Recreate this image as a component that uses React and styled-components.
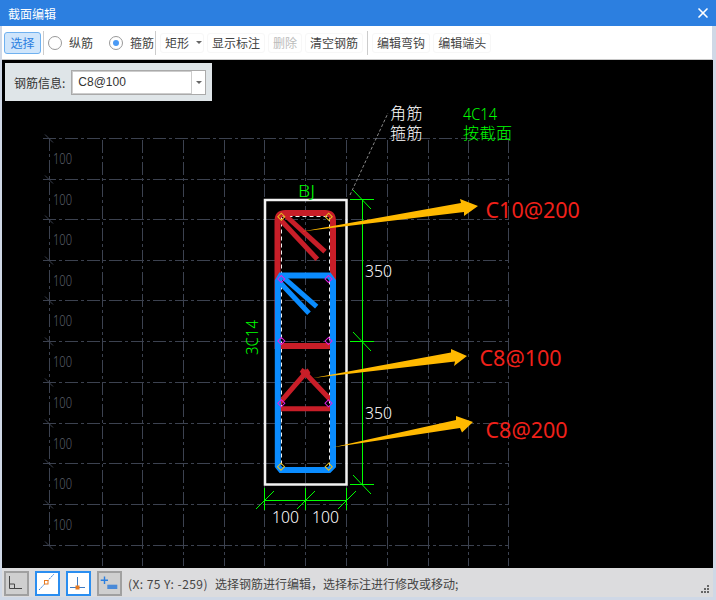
import React from "react";
import styled, { createGlobalStyle } from "styled-components";
import { FiX } from "react-icons/fi";

const CJK = `"Noto Sans CJK SC", "Noto Sans", sans-serif`;
const CAD = `"Noto Sans", sans-serif`;
const GRID = "#3c4250";
const GREEN = "#00ff00";
const RED = "#c81e28";
const BLUE = "#0a8cff";
const ORANGE = "#ffb900";

const Global = createGlobalStyle`
  html, body { margin: 0; padding: 0; height: 600px; overflow: hidden; background: #cfd8e6; }
  #root { height: 600px; }
`;

const gridX = [102.5, 142.5, 183.5, 224.5, 264.5, 305.5, 346.5, 387.5, 428.5, 468.5, 508.5];
const gridY = [138.5, 179.5, 219.5, 260.5, 300.5, 341.5, 382.5, 423.5, 463.5, 504.5, 545.5];
const DASH = "13 3 3 3";

const pins = [
  [281.3, 216.7, "#e8c020"],
  [328.7, 216.7, "#e8c020"],
  [281.3, 279, "#e020e0"],
  [328.5, 279, "#e020e0"],
  [281.3, 341, "#e020e0"],
  [328.5, 341, "#e020e0"],
  [281.3, 403.3, "#e020e0"],
  [328.5, 403.3, "#e020e0"],
  [281, 466.7, "#e8c020"],
  [328.7, 466.7, "#e8c020"],
];

const CadText = ({ x, y, fill, size, len, children }) => (
  <text x={x} y={y} fill={fill} stroke="none" fontSize={size} fontWeight="300" fontFamily={CAD} textLength={len} lengthAdjust="spacingAndGlyphs">
    {children}
  </text>
);

const Label = ({ x, y, children }) => (
  <text x={x} y={y} fill="#f0201a" fontSize="21.5" fontFamily="Noto Sans, sans-serif">
    {children}
  </text>
);

const Grid = () => (
  <g stroke={GRID} strokeWidth="1" fill="none">
    {gridX.map((x) => (
      <line key={x} x1={x} y1="140" x2={x} y2="566" strokeDasharray={DASH} />
    ))}
    {gridY.map((y) => (
      <line key={y} x1="43" y1={y} x2="509" y2={y} strokeDasharray={DASH} />
    ))}
    <line x1="49.5" y1="138" x2="49.5" y2="546" strokeDasharray={DASH} />
    {gridY.map((y) => (
      <line key={"t" + y} x1="45" y1={y - 4} x2="53" y2={y + 4} />
    ))}
    {gridY.slice(0, 10).map((y) => (
      <CadText key={"l" + y} x={53} y={y + 25} fill="#5a5f69" size={14} len={19}>
        100
      </CadText>
    ))}
  </g>
);

const Section = () => (
  <Drawing viewBox="0 60 716 508" width="716" height="508">
    <Grid />
    <line x1="350" y1="195" x2="388" y2="113" stroke="#888" strokeDasharray="3 2" />
    <rect x="265" y="200" width="81.5" height="284.5" fill="none" stroke="#f2f2f2" strokeWidth="2.5" />
    <rect x="281.5" y="216.5" width="48" height="251" fill="none" stroke="#f0f0f0" strokeDasharray="4 3" />

    <g fill="none" stroke={RED} strokeWidth="6">
      <path d="M277.5 346 V221 Q277.5 213 285.5 213 H325 Q333 213 333 221 V346 Z" />
      <g strokeWidth="5">
        <line x1="280.7" y1="220" x2="317.3" y2="259.3" />
        <line x1="285" y1="215" x2="325" y2="251.7" />
        <line x1="277.5" y1="408.7" x2="333" y2="408.7" />
        <path d="M279.3 403.3 L305.3 373.3 L330.7 400" />
        <line x1="301" y1="370" x2="309" y2="375" />
        <line x1="302" y1="375" x2="309" y2="370.5" />
      </g>
    </g>
    <g fill="none" stroke={BLUE} strokeWidth="6">
      <path d="M277.8 281 L281 275.5 H329 L333 281 V466 L329 470 H281 L277.8 466 Z" />
      <g strokeWidth="5">
        <line x1="279.3" y1="281.7" x2="309" y2="313.3" />
        <line x1="283.3" y1="277.3" x2="316.7" y2="306.7" />
      </g>
    </g>

    {pins.map(([x, y, c]) => (
      <rect key={x + "-" + y} x={x - 2.5} y={y - 2.5} width="5" height="5" fill="none" stroke={c} transform={`rotate(45 ${x} ${y})`} />
    ))}

    <g stroke={GREEN} strokeWidth="1" fill="none">
      <line x1="362.5" y1="199" x2="362.5" y2="485" />
      <line x1="350" y1="199.5" x2="374" y2="199.5" />
      <line x1="350" y1="341.5" x2="374" y2="341.5" />
      <line x1="350" y1="484.5" x2="374" y2="484.5" />
      <line x1="353" y1="190" x2="371" y2="209" />
      <line x1="353" y1="332" x2="371" y2="351" />
      <line x1="353" y1="475" x2="371" y2="494" />
      <line x1="264" y1="500.5" x2="347" y2="500.5" />
      <line x1="264.5" y1="488" x2="264.5" y2="510" />
      <line x1="305.5" y1="488" x2="305.5" y2="510" />
      <line x1="346.5" y1="488" x2="346.5" y2="510" />
      <line x1="256" y1="509" x2="274" y2="491" />
      <line x1="297" y1="509" x2="315" y2="491" />
      <line x1="338" y1="509" x2="356" y2="491" />
    </g>

    <polygon points="302,231.5 461,203 460,199 478,206 464,216 464,212" fill={ORANGE} />
    <polygon points="313,378 451,352.5 451,349 467,356 454,366 455,361.5" fill={ORANGE} />
    <polygon points="332,447.5 456,420 456,416 473,422 462,432.5 460,428" fill={ORANGE} />

    <CadText x={365} y={277} fill="#fff" size={17} len={27}>350</CadText>
    <CadText x={365} y={419} fill="#fff" size={17} len={27}>350</CadText>
    <CadText x={272} y={523} fill="#fff" size={17} len={27}>100</CadText>
    <CadText x={312} y={523} fill="#fff" size={17} len={27}>100</CadText>
    <CadText x={298} y={197} fill={GREEN} size={16} len={17}>BJ</CadText>
    <CadText x={463} y={120} fill={GREEN} size={16} len={34}>4C14</CadText>
    <g transform="rotate(-90 258 355)">
      <CadText x={258} y={355} fill={GREEN} size={16} len={35}>3C14</CadText>
    </g>
    <CanvasText x="390" y="119" fill="#fff">角筋</CanvasText>
    <CanvasText x="390" y="139" fill="#fff">箍筋</CanvasText>
    <CanvasText x="463" y="139" fill={GREEN}>按截面</CanvasText>

    <Label x="485.5" y="218">C10@200</Label>
    <Label x="479.5" y="366">C8@100</Label>
    <Label x="485.5" y="438">C8@200</Label>
  </Drawing>
);

const App = () => (
  <>
    <Global />
    <Window>
      <TitleBar>
        <Title>截面编辑</Title>
        <Close><FiX size={16} strokeWidth={2.5} color="#fff" /></Close>
      </TitleBar>
      <Toolbar>
        <Tool $active>选择</Tool>
        <Sep $left={-1} />
        <RadioWrap>
          <Radio />
          <span>纵筋</span>
        </RadioWrap>
        <RadioWrap $left={13}>
          <Radio $on />
          <span>箍筋</span>
        </RadioWrap>
        <Sep $left={-2} />
        <Tool>
          矩形<ToolCaret />
        </Tool>
        <Tool>显示标注</Tool>
        <Tool $disabled>删除</Tool>
        <Tool>清空钢筋</Tool>
        <Sep $left={1} />
        <Tool>编辑弯钩</Tool>
        <Tool>编辑端头</Tool>
      </Toolbar>
      <Canvas>
        <Section />
        <InfoPanel>
          <span>钢筋信息:</span>
          <Combo>
            <ComboValue>C8@100</ComboValue>
            <ComboDrop><Caret /></ComboDrop>
          </Combo>
        </InfoPanel>
      </Canvas>
      <StatusBar>
        <StatusBtn>
          <svg width="21" height="21" viewBox="0 0 21 21" fill="none" stroke="#444">
            <path d="M3.5 3 V15.5 H16" />
            <path d="M3.5 11 H8.5 V15.5" />
          </svg>
        </StatusBtn>
        <StatusBtn $on>
          <svg width="21" height="21" viewBox="0 0 21 21" fill="none">
            <line x1="2" y1="17" x2="17" y2="1" stroke="#2b7fe0" strokeDasharray="2 1" />
            <rect x="7.5" y="7.5" width="3.5" height="3.5" fill="#fff" stroke="#e87a20" />
          </svg>
        </StatusBtn>
        <StatusBtn $on>
          <svg width="21" height="21" viewBox="0 0 21 21" fill="none">
            <line x1="9.5" y1="4" x2="9.5" y2="15" stroke="#3f7cc4" />
            <line x1="2" y1="14.5" x2="17" y2="14.5" stroke="#3f7cc4" />
            <rect x="7.5" y="12.5" width="4" height="4" fill="#e87a20" />
          </svg>
        </StatusBtn>
        <StatusBtn>
          <svg width="21" height="21" viewBox="0 0 21 21" fill="none">
            <path d="M5.5 3.5 V11 M1.7 7.3 H9" stroke="#2b7fe0" strokeWidth="1.4" />
            <rect x="8.3" y="11.7" width="10" height="4.3" fill="#4a8ad8" />
          </svg>
        </StatusBtn>
        <StatusText>
          <Coords>(X: 75 Y: -259)</Coords>
          选择钢筋进行编辑，选择标注进行修改或移动;
        </StatusText>
        <Grip width="10" height="10" viewBox="0 0 10 10" fill="#666">
          <rect x="7" y="0" width="2" height="2" />
          <rect x="4" y="3" width="2" height="2" />
          <rect x="7" y="3" width="2" height="2" />
          <rect x="1" y="6" width="2" height="2" />
          <rect x="4" y="6" width="2" height="2" />
          <rect x="7" y="6" width="2" height="2" />
        </Grip>
      </StatusBar>
    </Window>
  </>
);

const Window = styled.div`
  width: 716px;
  height: 600px;
  display: flex;
  flex-direction: column;
  font-family: ${CJK};
  font-size: 12px;
  color: #333;
  background: #cfd8e6;
  overflow: hidden;
`;

const TitleBar = styled.div`
  height: 26px;
  flex: none;
  background: #2c7fe0;
  display: flex;
  align-items: center;
  justify-content: space-between;
  padding: 0 5px 0 8px;
`;

const Title = styled.div`
  color: #fff;
  font-size: 12px;
`;

const Close = styled.div`
  display: flex;
  align-items: center;
`;

const Toolbar = styled.div`
  height: 33px;
  flex: none;
  margin: 0 4px 0 2px;
  background: #fff;
  border-bottom: 1px solid #c8c8c8;
  display: flex;
  align-items: center;
  gap: 3px;
  padding-left: 2px;
`;

const Tool = styled.div`
  height: ${(p) => (p.$active ? "22px" : "20px")};
  box-sizing: border-box;
  padding: 0 ${(p) => (p.$active ? "5.5px" : "4px")};
  display: flex;
  align-items: center;
  gap: 7px;
  border-radius: 3px;
  border: 1px solid ${(p) => (p.$active ? "#6fb1f0" : "#f7f7f7")};
  background: ${(p) => (p.$active ? "#cfe5fb" : "#fff")};
  color: ${(p) => (p.$active ? "#2b7fe0" : p.$disabled ? "#bbb" : "#444")};
`;

const Sep = styled.div`
  width: 1px;
  height: 24px;
  margin-left: ${(p) => p.$left}px;
  margin-right: 1px;
  background: #ccc;
`;

const RadioWrap = styled.div`
  display: flex;
  align-items: center;
  gap: 7px;
  margin-left: ${(p) => p.$left || 0}px;
  color: #444;
`;

const Radio = styled.div`
  width: 14px;
  height: 14px;
  box-sizing: border-box;
  border-radius: 50%;
  border: 1px solid #999;
  background: #fff;
  display: flex;
  align-items: center;
  justify-content: center;
  &::after {
    content: "";
    display: ${(p) => (p.$on ? "block" : "none")};
    width: 6px;
    height: 6px;
    border-radius: 50%;
    background: #4a9af5;
  }
`;

const Caret = styled.i`
  display: inline-block;
  width: 0;
  height: 0;
  border-left: 3px solid transparent;
  border-right: 3px solid transparent;
  border-top: 3px solid #666;
`;

const ToolCaret = styled(Caret)`
  margin-right: -3px;
`;

const Canvas = styled.div`
  flex: 1;
  position: relative;
  margin: 0 3px 0 2px;
  background: #000;
  overflow: hidden;
`;

const Drawing = styled.svg`
  position: absolute;
  left: -2px;
  top: 0;
`;

const CanvasText = styled.text`
  font-family: ${CJK};
  font-size: 16px;
  font-weight: 300;
  letter-spacing: 0.5px;
`;

const InfoPanel = styled.div`
  position: absolute;
  left: 3px;
  top: 3px;
  width: 207px;
  height: 38px;
  box-sizing: border-box;
  padding: 0 6px 0 9px;
  background: #dfe5e8;
  display: flex;
  align-items: center;
  gap: 6px;
`;

const Combo = styled.div`
  flex: 1;
  height: 25px;
  box-sizing: border-box;
  border: 1px solid #aaa;
  background: #fff;
  display: flex;
`;

const ComboValue = styled.div`
  flex: 1;
  display: flex;
  align-items: center;
  padding-left: 5px;
  border: 1px solid #ccc;
  font-family: "Liberation Sans", sans-serif;
  font-size: 12px;
`;

const ComboDrop = styled.div`
  width: 13px;
  display: flex;
  align-items: center;
  justify-content: center;
`;

const StatusBar = styled.div`
  height: 29px;
  flex: none;
  position: relative;
  margin: 0 3px 3px 2px;
  background: #dcdcde;
  display: flex;
  align-items: center;
  gap: 6px;
  padding-left: 2px;
`;

const StatusBtn = styled.div`
  width: 25px;
  height: 25px;
  margin-top: 2px;
  box-sizing: border-box;
  display: flex;
  align-items: center;
  justify-content: center;
  border: 2px solid ${(p) => (p.$on ? "#2b8ef0" : "#a0a0a0")};
  background: ${(p) => (p.$on ? "#fff" : "#cfcfcf")};
`;

const StatusText = styled.div`
  margin-top: 2px;
  font-size: 12px;
  color: #444;
`;

const Coords = styled.span`
  letter-spacing: 0.45px;
  margin-right: 7px;
`;

const Grip = styled.svg`
  position: absolute;
  right: 3px;
  bottom: 2px;
`;

export default App;
